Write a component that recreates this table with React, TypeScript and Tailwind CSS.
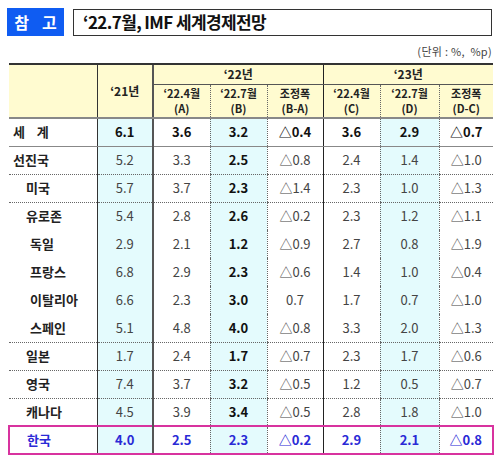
const font = { fontFamily: '"Noto Sans CJK KR", "Noto Sans", sans-serif' };

type Row = {
  label: string;
  indent: string;
  bottom: "solid" | "dotted" | "none" | "box";
  bold?: boolean;
  korea?: boolean;
  v: string[];
};

const rows: Row[] = [
  { label: "세    계", indent: "pl-[4px]", bottom: "solid", bold: true, v: ["6.1", "3.6", "3.2", "△0.4", "3.6", "2.9", "△0.7"] },
  { label: "선진국", indent: "pl-[4px]", bottom: "dotted", v: ["5.2", "3.3", "2.5", "△0.8", "2.4", "1.4", "△1.0"] },
  { label: "미국", indent: "pl-[17px]", bottom: "dotted", v: ["5.7", "3.7", "2.3", "△1.4", "2.3", "1.0", "△1.3"] },
  { label: "유로존", indent: "pl-[17px]", bottom: "none", v: ["5.4", "2.8", "2.6", "△0.2", "2.3", "1.2", "△1.1"] },
  { label: "독일", indent: "pl-[21px]", bottom: "none", v: ["2.9", "2.1", "1.2", "△0.9", "2.7", "0.8", "△1.9"] },
  { label: "프랑스", indent: "pl-[21px]", bottom: "none", v: ["6.8", "2.9", "2.3", "△0.6", "1.4", "1.0", "△0.4"] },
  { label: "이탈리아", indent: "pl-[21px]", bottom: "none", v: ["6.6", "2.3", "3.0", "0.7", "1.7", "0.7", "△1.0"] },
  { label: "스페인", indent: "pl-[21px]", bottom: "dotted", v: ["5.1", "4.8", "4.0", "△0.8", "3.3", "2.0", "△1.3"] },
  { label: "일본", indent: "pl-[17px]", bottom: "dotted", v: ["1.7", "2.4", "1.7", "△0.7", "2.3", "1.7", "△0.6"] },
  { label: "영국", indent: "pl-[17px]", bottom: "dotted", v: ["7.4", "3.7", "3.2", "△0.5", "1.2", "0.5", "△0.7"] },
  { label: "캐나다", indent: "pl-[17px]", bottom: "none", v: ["4.5", "3.9", "3.4", "△0.5", "2.8", "1.8", "△1.0"] },
  { label: "한국", indent: "pl-[17px]", bottom: "box", korea: true, v: ["4.0", "2.5", "2.3", "△0.2", "2.9", "2.1", "△0.8"] },
];

// left border of each column
const vLine = [
  "",
  "border-l border-l-[#333]",
  "border-l-2 border-l-[#555]",
  "border-l border-l-[#666] [border-left-style:dotted]",
  "border-l border-l-[#666] [border-left-style:dotted]",
  "border-l border-l-[#222]",
  "border-l border-l-[#666] [border-left-style:dotted]",
  "border-l border-l-[#666] [border-left-style:dotted]",
];

const bottomLine = {
  solid: "border-b border-b-[#888]",
  dotted: "border-b border-b-[#666] [border-bottom-style:dotted]",
  none: "",
  box: "border-y-2 border-y-[#d8339f]",
};

const cyan = [false, true, false, true, false, false, true, false];

const SubHead = ({ top, bottom, idx }: { top: string; bottom: string; idx: number }) => (
  <th className={`${vLine[idx]} border-b-2 border-b-[#888] bg-[#fffbd0] text-[11px] font-bold leading-[15px] text-[#222] align-middle p-0`}>
    <div>{top}</div>
    <div className="font-semibold">{bottom}</div>
  </th>
);

export default function App() {
  return (
    <div className="w-[500px] h-[457px] bg-white overflow-hidden" style={font}>
      {/* title */}
      <div className="flex items-center gap-[9px] pl-[7px] pr-[8px] pt-[8px]">
        <div className="w-[57px] h-[28px] shrink-0 bg-[#0f5cf2] text-white font-bold text-[16px] leading-none flex items-center justify-center gap-[13px] whitespace-nowrap">
          <span>참</span>
          <span>고</span>
        </div>
        <div className="flex-1 h-[27px] border-[1.5px] border-[#333] flex items-center pl-[9px] text-[17px] font-bold text-[#111] tracking-[-0.6px] whitespace-nowrap">
          ‘22.7월, IMF 세계경제전망
        </div>
      </div>
      <div className="text-right pr-[8px] mt-[8px] text-[11px] text-[#444] leading-[14px] whitespace-pre tracking-[0.3px]">(단위 : %,  %p)</div>

      {/* table */}
      <table className="ml-[8px] mt-[5px] w-[484px] table-fixed border-collapse">
        <colgroup>
          <col className="w-[88px]" />
          <col className="w-[56px]" />
          <col className="w-[57px]" />
          <col className="w-[57px]" />
          <col className="w-[56px]" />
          <col className="w-[57px]" />
          <col className="w-[59px]" />
          <col className="w-[54px]" />
        </colgroup>
        <thead>
          <tr className="h-[20px]">
            <th rowSpan={2} className="bg-[#fffbd0] border-t-2 border-t-[#333] border-b-2 border-b-[#888] p-0" />
            <th rowSpan={2} className={`${vLine[1]} bg-[#fffbd0] border-t-2 border-t-[#333] border-b-2 border-b-[#888] text-[12px] font-bold text-[#222] leading-[16px] p-0`}>
              ‘21년
            </th>
            <th colSpan={3} className={`${vLine[2]} bg-[#fffbd0] border-t-2 border-t-[#333] border-b border-b-[#555] text-[12px] font-bold text-[#222] leading-[16px] p-0`}>
              ‘22년
            </th>
            <th colSpan={3} className={`${vLine[5]} bg-[#fffbd0] border-t-2 border-t-[#333] border-b border-b-[#555] text-[12px] font-bold text-[#222] leading-[16px] p-0`}>
              ‘23년
            </th>
          </tr>
          <tr className="h-[34px]">
            <SubHead idx={2} top="‘22.4월" bottom="(A)" />
            <SubHead idx={3} top="‘22.7월" bottom="(B)" />
            <SubHead idx={4} top="조정폭" bottom="(B-A)" />
            <SubHead idx={5} top="‘22.4월" bottom="(C)" />
            <SubHead idx={6} top="‘22.7월" bottom="(D)" />
            <SubHead idx={7} top="조정폭" bottom="(D-C)" />
          </tr>
        </thead>
        <tbody>
          {rows.map((r) => (
            <tr key={r.label} className="h-[28px]">
              <td
                className={`${bottomLine[r.bottom]} ${r.korea ? "border-l-2 border-l-[#d8339f] text-[#2a2ad6]" : "text-[#222]"} ${r.indent} text-[13px] leading-[16px] font-bold whitespace-pre py-0`}
              >
                {r.label}
              </td>
              {r.v.map((val, i) => {
                const idx = i + 1;
                const strong = r.bold || r.korea || idx === 3;
                return (
                  <td
                    key={idx}
                    className={`${vLine[idx]} ${bottomLine[r.bottom]} ${idx === 7 && r.korea ? "border-r-2 border-r-[#d8339f]" : ""} ${cyan[idx] ? "bg-[#e4fbfd]" : "bg-white"} ${
                      r.korea ? "text-[#2a2ad6] font-bold" : strong ? "text-[#111] font-bold" : "text-[#444]"
                    } text-center text-[13px] leading-[16px] p-0`}
                  >
                    {val}
                  </td>
                );
              })}
            </tr>
          ))}
        </tbody>
      </table>
    </div>
  );
}
